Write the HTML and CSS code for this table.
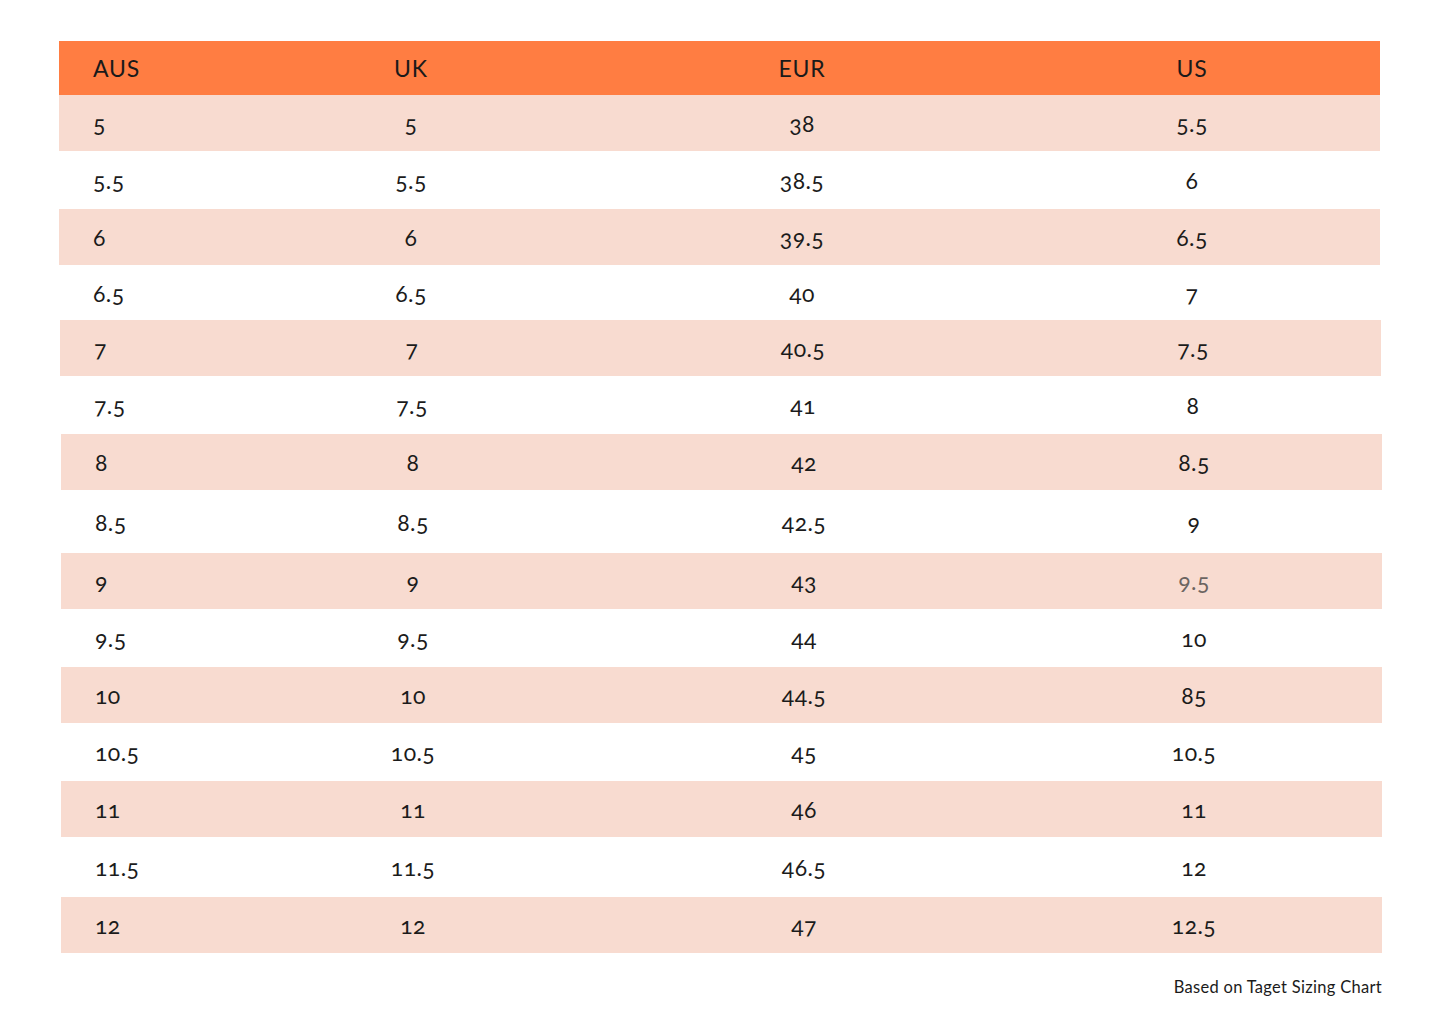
FILE: index.html
```html
<!DOCTYPE html>
<html lang="en">
<head>
<meta charset="utf-8">
<title>Size Chart</title>
<link rel="stylesheet" href="styles.css">
</head>
<body>
<main class="page">
  <div class="chart">
    <div class="row head"><div class="c">AUS</div><div class="c">UK</div><div class="c">EUR</div><div class="c">US</div></div>
    <div class="row pink h56"><div class="c">5</div><div class="c">5</div><div class="c">38</div><div class="c">5.5</div></div>
    <div class="row h58"><div class="c">5.5</div><div class="c">5.5</div><div class="c">38.5</div><div class="c">6</div></div>
    <div class="row pink h56"><div class="c">6</div><div class="c">6</div><div class="c">39.5</div><div class="c">6.5</div></div>
    <div class="row h55"><div class="c">6.5</div><div class="c">6.5</div><div class="c">40</div><div class="c">7</div></div>
    <div class="row pink h56 s1"><div class="c">7</div><div class="c">7</div><div class="c">40.5</div><div class="c">7.5</div></div>
    <div class="row h58 s1"><div class="c">7.5</div><div class="c">7.5</div><div class="c">41</div><div class="c">8</div></div>
    <div class="row pink h56 s2"><div class="c">8</div><div class="c">8</div><div class="c">42</div><div class="c">8.5</div></div>
    <div class="row h63 s2"><div class="c">8.5</div><div class="c">8.5</div><div class="c">42.5</div><div class="c">9</div></div>
    <div class="row pink h56 s2"><div class="c">9</div><div class="c">9</div><div class="c">43</div><div class="c muted">9.5</div></div>
    <div class="row h58 s2"><div class="c">9.5</div><div class="c">9.5</div><div class="c">44</div><div class="c">10</div></div>
    <div class="row pink h56 s2"><div class="c">10</div><div class="c">10</div><div class="c">44.5</div><div class="c">85</div></div>
    <div class="row h58 s2"><div class="c">10.5</div><div class="c">10.5</div><div class="c">45</div><div class="c">10.5</div></div>
    <div class="row pink h56 s2"><div class="c">11</div><div class="c">11</div><div class="c">46</div><div class="c">11</div></div>
    <div class="row h60 s2"><div class="c">11.5</div><div class="c">11.5</div><div class="c">46.5</div><div class="c">12</div></div>
    <div class="row pink h56 s2"><div class="c">12</div><div class="c">12</div><div class="c">47</div><div class="c">12.5</div></div>
  </div>
  <p class="note">Based on Taget Sizing Chart</p>
</main>
</body>
</html>
```

FILE: styles.css
```css
html, body {
  margin: 0;
  padding: 0;
  background: #ffffff;
}

body {
  font-family: "Lato", "Open Sans", "Liberation Sans", sans-serif;
  color: #1b1b1b;
}

.page {
  padding: 41px 0 0 59px;
  width: 1323px;
}

.chart {
  display: flex;
  flex-direction: column;
  align-items: flex-start;
  font-variant-numeric: oldstyle-nums;
  font-feature-settings: "onum" 1;
}

.row {
  display: grid;
  grid-template-columns: 163px 378px 404px 376px;
  width: 1321px;
  align-items: center;
  font-size: 23px;
  font-weight: 400;
  letter-spacing: 0.4px;
}

.row .c {
  text-align: center;
}

.row .c:first-child {
  text-align: left;
  padding-left: 34px;
}

.head {
  height: 54px;
  background: #ff7d42;
  color: #1a1a1a;
  letter-spacing: 0.8px;
}

.pink {
  background: #f8dbd0;
}

.h55 { height: 55px; }
.h56 { height: 56px; }
.h58 { height: 58px; }
.h60 { height: 60px; }
.h63 { height: 63px; }

.s1 { margin-left: 1px; }
.s2 { margin-left: 2px; }

.muted {
  color: #6b6461;
}

.note {
  margin: 24px 0 0;
  text-align: right;
  font-size: 16.5px;
  letter-spacing: 0.3px;
  color: #1b1b1b;
}
```
